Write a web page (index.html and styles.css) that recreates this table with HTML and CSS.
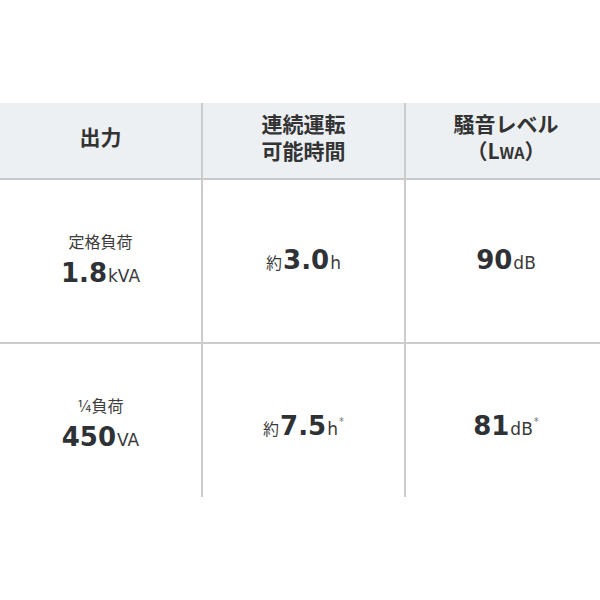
FILE: index.html
```html
<!DOCTYPE html>
<html lang="ja">
<head>
<meta charset="utf-8">
<link rel="stylesheet" href="styles.css">
</head>
<body>
<div class="wrap">
  <div class="spec">
    <div class="cell head"><span class="hline">出力</span></div>
    <div class="cell head"><span class="hline">連続運転</span><span class="hline">可能時間</span></div>
    <div class="cell head last"><span class="hline">騒音レベル</span><span class="hline">（L<span class="sc">WA</span>）</span></div>

    <div class="cell row1"><span class="label">定格負荷</span><span class="val"><b class="num">1.8</b><span class="unit">kVA</span></span></div>
    <div class="cell row1"><span class="val"><span class="pre">約</span><b class="num">3.0</b><span class="unit">h</span></span></div>
    <div class="cell row1 last"><span class="val"><b class="num">90</b><span class="unit">dB</span></span></div>

    <div class="cell row2"><span class="label">¼負荷</span><span class="val"><b class="num">450</b><span class="unit">VA</span></span></div>
    <div class="cell row2"><span class="val"><span class="pre">約</span><b class="num">7.5</b><span class="unit">h</span><sup class="ast">*</sup></span></div>
    <div class="cell row2 last"><span class="val"><b class="num">81</b><span class="unit">dB</span><sup class="ast">*</sup></span></div>
  </div>
</div>
</body>
</html>
```
FILE: styles.css
```css
html, body {
  margin: 0;
  padding: 0;
  background: #fff;
  overflow: hidden;
}
body {
  width: 600px;
  height: 600px;
  font-family: "Noto Sans CJK JP", "Noto Sans", sans-serif;
  color: #333;
}
.wrap {
  width: 600px;
  overflow: hidden;
  padding-top: 103px;
}
.spec {
  width: 606px;
  display: grid;
  grid-template-columns: 203px 203px 200px;
}
.cell {
  display: flex;
  flex-direction: column;
  align-items: center;
  justify-content: center;
  text-align: center;
  border-right: 2px solid #cccccc;
  box-sizing: border-box;
}
.cell.last {
  border-right: none;
}
.head {
  background: #edf0f3;
  height: 77px;
  border-bottom: 2px solid #c9c9c9;
  font-weight: 700;
  font-size: 21px;
  color: #333;
  padding-bottom: 8px;
}
.hline {
  display: block;
  line-height: 27px;
  height: 27px;
}
.sc {
  font-size: 16px;
}
.row1 {
  height: 164px;
  border-bottom: 2px solid #cccccc;
}
.row2 {
  height: 153px;
  padding-top: 9px;
}
.label {
  font-size: 16px;
  line-height: 22px;
  color: #3d3d3d;
}
.val {
  display: block;
  line-height: 34px;
  white-space: nowrap;
}
.label + .val {
  margin-top: 4px;
}
.num {
  font-family: "DejaVu Sans", sans-serif;
  font-weight: 700;
  font-size: 26px;
  color: #2e3236;
}
.unit {
  font-family: "DejaVu Sans", sans-serif;
  font-size: 17px;
  color: #3a3a3a;
  margin-left: 1px;
}
.pre {
  font-size: 16px;
  color: #3a3a3a;
  margin-right: 1px;
}
.ast {
  font-family: "DejaVu Sans", sans-serif;
  font-size: 10px;
  color: #777;
  vertical-align: 10px;
  margin-left: 1px;
}
```
